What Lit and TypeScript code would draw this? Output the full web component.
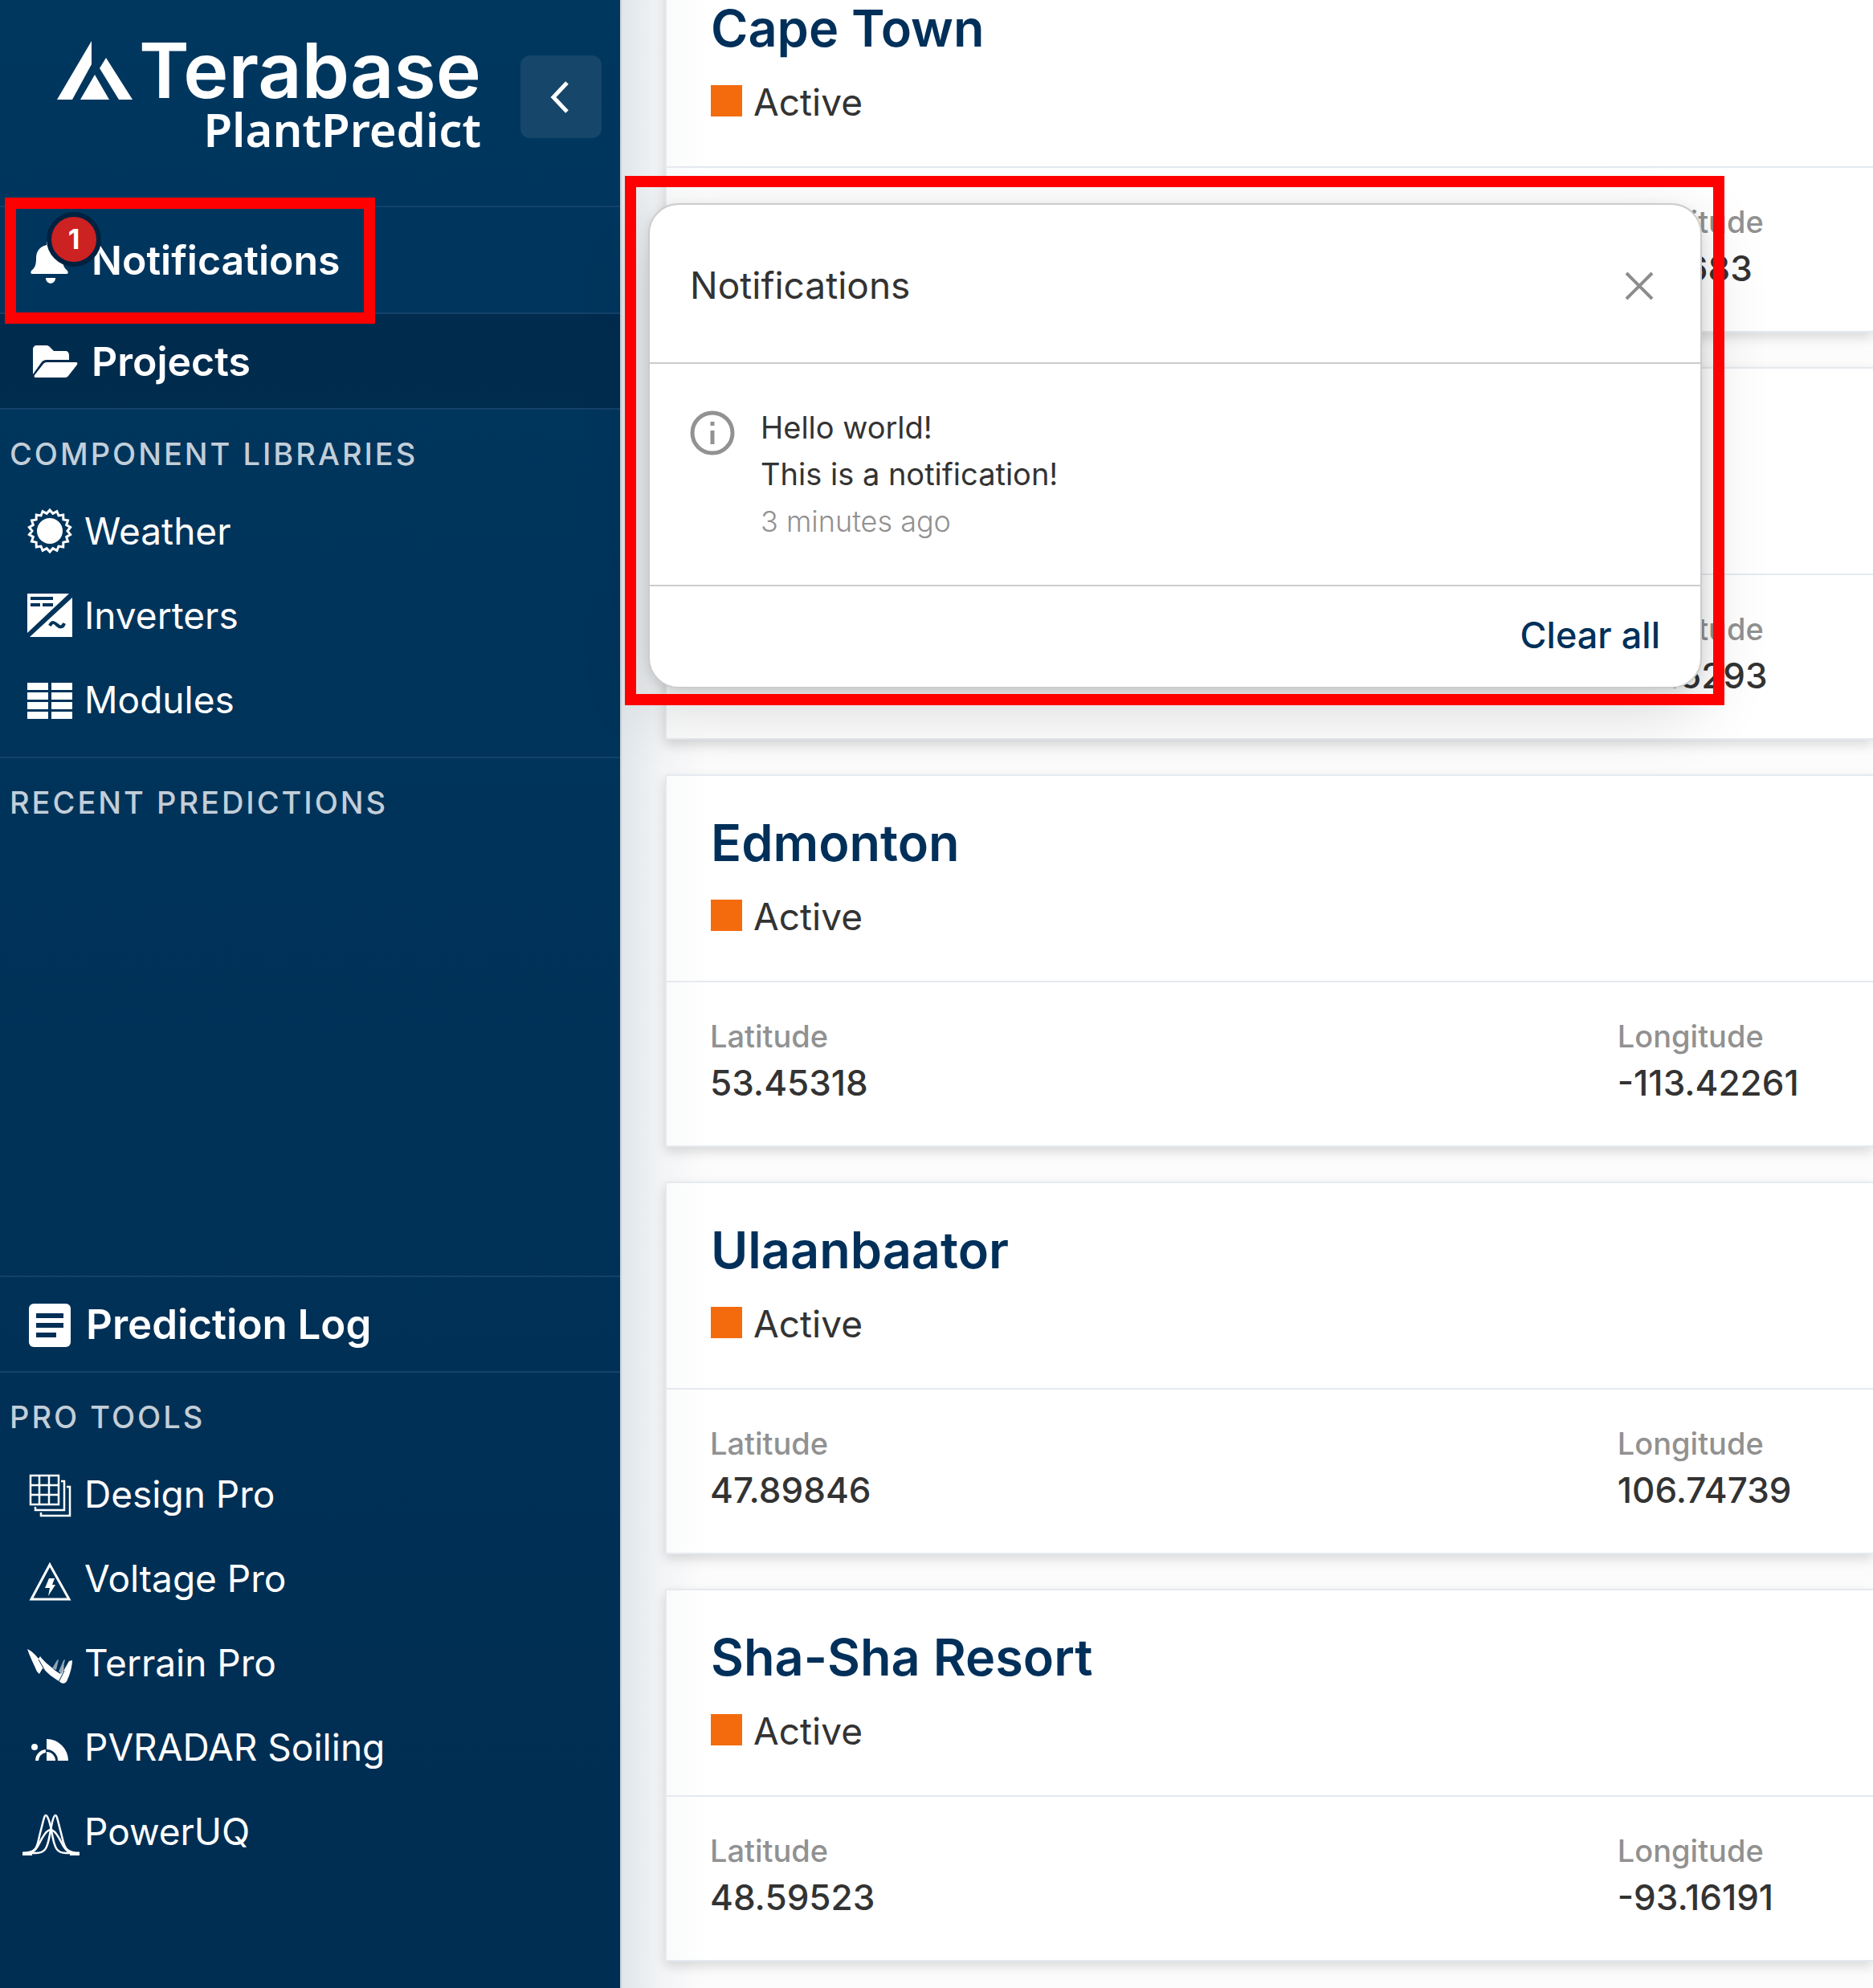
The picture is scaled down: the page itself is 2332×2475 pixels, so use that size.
import { LitElement, html, svg, css, nothing, SVGTemplateResult, TemplateResult } from "lit";
import { customElement, property } from "lit/decorators.js";

/** Zigzag outline of the sun icon. */
const sunRays = Array.from({ length: 36 }, (_, i) => {
  const r = i % 2 ? 22 : 26;
  const a = (i * Math.PI) / 18 - Math.PI / 2;
  return `${(28 + r * Math.cos(a)).toFixed(2)},${(28 + r * Math.sin(a)).toFixed(2)}`;
}).join(" ");

const icons: Record<string, SVGTemplateResult> = {
  bell: svg`<path fill="#fff" d="M24 5c1-2 5-2 6 0v4c9 2 14 8 14 17 0 8 2 12 6 15 1 2 1 4-1 4H6c-2 0-2-2-1-4 4-3 6-7 6-15 0-9 4-15 13-17z"/><path fill="#fff" d="M23 50h12c0 9-12 9-12 0z"/>`,
  folder: svg`<path fill="#fff" d="M7 44V13c0-3 2-5 5-5h12c2 0 3 1 4 2l5 5h15c2 0 4 2 4 5v6H24c-3 0-5 1-7 4z"/><path fill="#fff" d="M20 31c1-1 2-2 4-2h37c1 0 2 1 1 3L51 46c-1 1-2 2-4 2H10c-1 0-2-1-1-3z"/>`,
  weather: svg`<polygon points=${sunRays} fill="none" stroke="#fff" stroke-width="3" stroke-linejoin="miter"/><circle cx="28" cy="28" r="16" fill="#fff"/>`,
  inverters: svg`<path fill="#fff" d="M0 1h52L0 50zM56 6v49H3z"/><path stroke="#00345b" stroke-width="4" d="M4 7h28M4 15h12M19 15h13"/><path fill="none" stroke="#00345b" stroke-width="4" d="M28 41c3-6 6-4 9-1s7 4 9-2"/>`,
  modules: svg`<path fill="#fff" d="M0 7h26v9H0zM30 7h26v9H30zM0 19h26v9H0zM30 19h26v9H30zM0 31h26v9H0zM30 31h26v9H30zM0 43h26v9H0zM30 43h26v9H30z"/>`,
  log: svg`<rect x="2" y="2" width="52" height="54" rx="6" fill="#fff"/><path stroke="#002f55" stroke-width="6" d="M11 17h34M11 29h34M11 41h25"/>`,
  design: svg`<path fill="none" stroke="#fff" stroke-width="2.500" d="M4 5h35v36H4zM15 5v36M27 5v36M4 17h35M4 29h35M42 12h4v36H10v-4M49 19h4v36H17v-4"/>`,
  voltage: svg`<path fill="none" stroke="#fff" stroke-width="3" d="M28 11 52 54H5z"/><path fill="#fff" d="m27 28h7l-3 8h4L26 50l2-10h-6z"/>`,
  terrain: svg`<path fill="#fff" d="M0 11c5 2 10 7 14 12l2-3c4 6 11 11 19 18l6 4 4-12c1 3 0 6-1 10l8-14 4-1c0 7-3 18-6 24-1 4-5 6-8 4l-13-9-10-9-4 7-3-3C8 30 3 20 0 11z"/><path stroke="#002f53" stroke-width="1" d="m14 24 9 16M39 52l7-14"/><path fill="#8ea5b8" d="m31 35 6-10 2-1-3 13zM39 39l6-14 2-1-4 18z"/>`,
  soiling: svg`<circle cx="9" cy="28" r="4" fill="#fff"/><path fill="#fff" d="M24 18a27 27 0 0 1 27 27H38a14 14 0 0 0-14-14z"/><path fill="#fff" d="M24 34a11 11 0 0 1 11 11H24z"/><path fill="none" stroke="#fff" stroke-width="4" d="M12 45a12 12 0 0 1 11-12"/>`,
  power: svg`<g fill="none" stroke="#fff" stroke-width="2.500"><path d="M-6 55c20 0 18-10 22-25S21 8 23 8s5 7 8 24 6 23 17 23h17"/><path d="M65 55c-20 0-19-10-23-25S37 8 35 8s-4 7-7 24-6 23-17 23H-6"/><path d="M-6 56c14 0 17-5 22-15s9-15 13-15 8 5 13 15 8 15 23 15"/></g><path stroke="#fff" stroke-width="4" d="M-6 56H6M53 56h12"/>`,
};

const icon = (name: string): TemplateResult =>
  html`<svg class="icon" viewBox="0 0 56 56" aria-hidden="true">${icons[name]}</svg>`;

@customElement("project-card")
class ProjectCard extends LitElement {
  @property() name = "";
  @property() latitude = "";
  @property() longitude = "";

  static styles = css`
    :host {
      display: block;
      box-sizing: border-box;
      height: 464px;
      border: 2px solid #e5eaef;
      border-right: 0;
      background: linear-gradient(90deg, #fafbfb, #ffffff 52px);
      box-shadow: 0 6px 14px rgba(0, 0, 0, 0.14);
      color: #333333;
    }
    .head {
      height: 257px;
      box-sizing: border-box;
      padding: 47px 55px 0;
      border-bottom: 2px solid #e5eaef;
    }
    h2 {
      margin: 0;
      font-size: 63px;
      line-height: 72px;
      font-weight: 600;
      color: #00305a;
    }
    .status {
      display: flex;
      align-items: center;
      gap: 14px;
      margin-top: 28px;
      font-size: 46px;
      line-height: 56px;
    }
    .swatch {
      width: 39px;
      height: 39px;
      margin-bottom: 4px;
      background: #f46b0e;
    }
    dl {
      display: grid;
      grid-template-columns: minmax(0, 1129fr) minmax(0, 318fr);
      margin: 0;
      padding: 40px 0 0 54px;
    }
    dt {
      font-size: 38px;
      line-height: 54px;
      font-weight: 500;
      color: #919191;
    }
    dd {
      margin: 0;
      font-size: 44px;
      line-height: 62px;
      font-weight: 500;
    }
  `;

  private fact(label: string, value: string) {
    return html`<div>${value ? html`<dt>${label}</dt><dd>${value}</dd>` : nothing}</div>`;
  }

  render() {
    return html`
      <div class="head">
        ${this.name
          ? html`<h2>${this.name}</h2>
              <div class="status"><span class="swatch"></span><span>Active</span></div>`
          : nothing}
      </div>
      <dl>${this.fact("Latitude", this.latitude)}${this.fact("Longitude", this.longitude)}</dl>
    `;
  }
}

@customElement("notifications-panel")
class NotificationsPanel extends LitElement {
  static styles = css`
    :host {
      display: block;
      box-sizing: border-box;
      border: 2px solid #cccccc;
      border-radius: 38px;
      background: #ffffff;
      box-shadow: 0 28px 84px rgba(0, 0, 0, 0.16), 0 4px 14px rgba(0, 0, 0, 0.1);
      color: #333333;
    }
    header,
    footer {
      display: flex;
      align-items: center;
      justify-content: space-between;
      box-sizing: border-box;
      padding: 0 50px;
    }
    header {
      height: 198px;
      padding-top: 4px;
      border-bottom: 2px solid #cccccc;
    }
    footer {
      height: 127px;
      justify-content: flex-end;
      padding-bottom: 4px;
      border-top: 2px solid #cccccc;
    }
    h2 {
      margin: 0;
      font-size: 46px;
      line-height: 56px;
      font-weight: 400;
    }
    button {
      padding: 0;
      border: 0;
      background: none;
      font: inherit;
      cursor: pointer;
    }
    .close {
      display: flex;
      padding: 10px 8px 8px;
    }
    .close svg {
      width: 36px;
      height: 36px;
    }
    .clear {
      font-size: 45px;
      line-height: 56px;
      font-weight: 500;
      color: #00305a;
    }
    .item {
      display: flex;
      gap: 32px;
      height: 275px;
      box-sizing: border-box;
      padding: 50px 50px 0;
    }
    .info {
      flex: none;
      width: 56px;
      height: 56px;
      margin-top: 8px;
    }
    p {
      margin: 0;
      font-size: 38px;
      line-height: 58px;
    }
    .time {
      font-size: 36px;
      font-weight: 300;
      line-height: 60px;
      color: #919191;
    }
  `;

  render() {
    return html`
      <header>
        <h2>Notifications</h2>
        <button class="close" type="button" aria-label="Close">
          <svg viewBox="0 0 36 36"><path d="M2 2 34 34M34 2 2 34" stroke="#8c8c8c" stroke-width="4" /></svg>
        </button>
      </header>
      <div class="item">
        <svg class="info" viewBox="0 0 56 56" aria-hidden="true">
          <circle cx="28" cy="28" r="25" fill="none" stroke="#929292" stroke-width="5" />
          <path stroke="#929292" stroke-width="5" d="M28 14v5M28 25v17" />
        </svg>
        <div>
          <p>Hello world!</p>
          <p>This is a notification!</p>
          <p class="time">3 minutes ago</p>
        </div>
      </div>
      <footer><button class="clear" type="button">Clear all</button></footer>
    `;
  }
}

@customElement("app-root")
class AppRoot extends LitElement {
  static styles = css`
    :host {
      display: flex;
      position: relative;
      height: 100vh;
      overflow: hidden;
      font-family: Inter, "Liberation Sans", sans-serif;
      background: #fcfcfc;
    }
    .sidebar {
      display: flex;
      flex-direction: column;
      flex: none;
      box-sizing: border-box;
      width: 774px;
      border-right: 2px solid #c9d1da;
      background: linear-gradient(#00375f, #002d52);
      color: #ffffff;
    }
    .brand {
      display: flex;
      align-items: flex-start;
      justify-content: space-between;
      box-sizing: border-box;
      height: 258px;
      padding: 41px 23px 0 71px;
      border-bottom: 2px solid #14426a;
    }
    .logo {
      display: flex;
      flex-direction: column;
      align-items: flex-end;
      color: #ffffff;
      text-decoration: none;
    }
    .logo-row {
      display: flex;
      gap: 8px;
    }
    .mark {
      width: 94px;
      height: 73px;
      margin-top: 10px;
    }
    .name {
      font-size: 95px;
      line-height: 94px;
      font-weight: 600;
    }
    .product {
      font-family: "Noto Sans", "Open Sans", sans-serif;
      font-size: 58px;
      line-height: 52px;
      font-weight: 600;
    }
    .toggle {
      display: flex;
      align-items: center;
      justify-content: center;
      width: 101px;
      height: 103px;
      margin-top: 28px;
      padding: 0;
      border: 0;
      border-radius: 12px;
      background: #17466b;
    }
    .toggle svg {
      width: 30px;
      height: 44px;
      margin-right: 6px;
    }
    a {
      color: inherit;
      text-decoration: none;
    }
    .icon {
      flex: none;
      width: 56px;
      height: 56px;
      overflow: visible;
    }
    .main-item {
      display: flex;
      align-items: center;
      gap: 24px;
      box-sizing: border-box;
      width: 100%;
      padding: 0 0 0 34px;
      border: 0;
      border-bottom: 2px solid #14426a;
      background: none;
      color: #ffffff;
      font-family: inherit;
      font-size: 50px;
      line-height: 60px;
      font-weight: 600;
      text-align: left;
    }
    .bell {
      height: 133px;
    }
    .bell-icon {
      display: flex;
      position: relative;
    }
    .badge {
      position: absolute;
      left: 24px;
      top: -32px;
      display: flex;
      align-items: center;
      justify-content: center;
      width: 56px;
      height: 56px;
      border: 6px solid #00213f;
      border-radius: 50%;
      background: #cc2222;
      font-size: 34px;
      font-weight: 700;
      line-height: 40px;
    }
    .projects {
      height: 119px;
      background: linear-gradient(#002b4d, #002c4e);
    }
    .log {
      gap: 17px;
      height: 121px;
      border-top: 2px solid #14426a;
      font-size: 51px;
    }
    h3 {
      margin: 0;
      padding: 30px 12px 18px;
      font-size: 38px;
      line-height: 50px;
      font-weight: 500;
      letter-spacing: 3px;
      text-transform: uppercase;
      color: #c3ced8;
    }
    .libraries {
      padding-bottom: 19px;
      border-bottom: 2px solid #14426a;
    }
    .recent {
      flex: 1;
    }
    .tools {
      padding-bottom: 143px;
    }
    .item {
      display: flex;
      align-items: center;
      gap: 15px;
      height: 105px;
      padding-left: 34px;
      font-size: 46px;
      line-height: 56px;
    }
    main {
      flex: 1;
      min-width: 0;
      padding-left: 54px;
      background: linear-gradient(90deg, #e1e6ea, #f4f5f7 54px, #fcfcfc 106px);
    }
    .list {
      display: flex;
      flex-direction: column;
      gap: 43px;
      margin-top: -50px;
    }
    .panel {
      position: absolute;
      left: 807px;
      top: 253px;
      width: 1312px;
    }
    .frame {
      position: absolute;
      box-sizing: border-box;
      border: 14px solid #ff0000;
      pointer-events: none;
    }
    .frame-item {
      left: 6px;
      top: 246px;
      width: 461px;
      height: 157px;
    }
    .frame-panel {
      left: 778px;
      top: 219px;
      width: 1369px;
      height: 659px;
    }
  `;

  private libraries: [string, string][] = [
    ["weather", "Weather"],
    ["inverters", "Inverters"],
    ["modules", "Modules"],
  ];
  private tools: [string, string][] = [
    ["design", "Design Pro"],
    ["voltage", "Voltage Pro"],
    ["terrain", "Terrain Pro"],
    ["soiling", "PVRADAR Soiling"],
    ["power", "PowerUQ"],
  ];
  private projects = [
    { name: "Cape Town", latitude: "", longitude: "18.5683" },
    { name: "", latitude: "", longitude: "-21.5293" },
    { name: "Edmonton", latitude: "53.45318", longitude: "-113.42261" },
    { name: "Ulaanbaator", latitude: "47.89846", longitude: "106.74739" },
    { name: "Sha-Sha Resort", latitude: "48.59523", longitude: "-93.16191" },
  ];

  private menu(entries: [string, string][]) {
    return entries.map(([key, label]) => html`<a class="item" href="#${key}">${icon(key)}<span>${label}</span></a>`);
  }

  render() {
    return html`
      <nav class="sidebar">
        <div class="brand">
          <a class="logo" href="#home">
            <span class="logo-row">
              <svg class="mark" viewBox="0 0 94 73" aria-hidden="true">
                <path fill="#fff" d="M43 0v29L19 73H0zM61 21 94 73H77L53 34zM47 42 65 73H29z" />
              </svg>
              <span class="name">Terabase</span>
            </span>
            <span class="product">PlantPredict</span>
          </a>
          <button class="toggle" type="button" aria-label="Collapse menu">
            <svg viewBox="0 0 30 44"><path d="M25 4 8 22 25 40" fill="none" stroke="#fff" stroke-width="5" /></svg>
          </button>
        </div>
        <button class="main-item bell" type="button">
          <span class="bell-icon">${icon("bell")}<span class="badge">1</span></span>
          <span>Notifications</span>
        </button>
        <a class="main-item projects" href="#projects">${icon("folder")}<span>Projects</span></a>
        <section class="libraries">
          <h3>Component Libraries</h3>
          ${this.menu(this.libraries)}
        </section>
        <section class="recent"><h3>Recent Predictions</h3></section>
        <a class="main-item log" href="#log">${icon("log")}<span>Prediction Log</span></a>
        <section class="tools">
          <h3>Pro Tools</h3>
          ${this.menu(this.tools)}
        </section>
      </nav>
      <main>
        <div class="list">
          ${this.projects.map(
            (p) => html`<project-card .name=${p.name} .latitude=${p.latitude} .longitude=${p.longitude}></project-card>`
          )}
        </div>
      </main>
      <notifications-panel class="panel"></notifications-panel>
      <div class="frame frame-item"></div>
      <div class="frame frame-panel"></div>
    `;
  }
}
